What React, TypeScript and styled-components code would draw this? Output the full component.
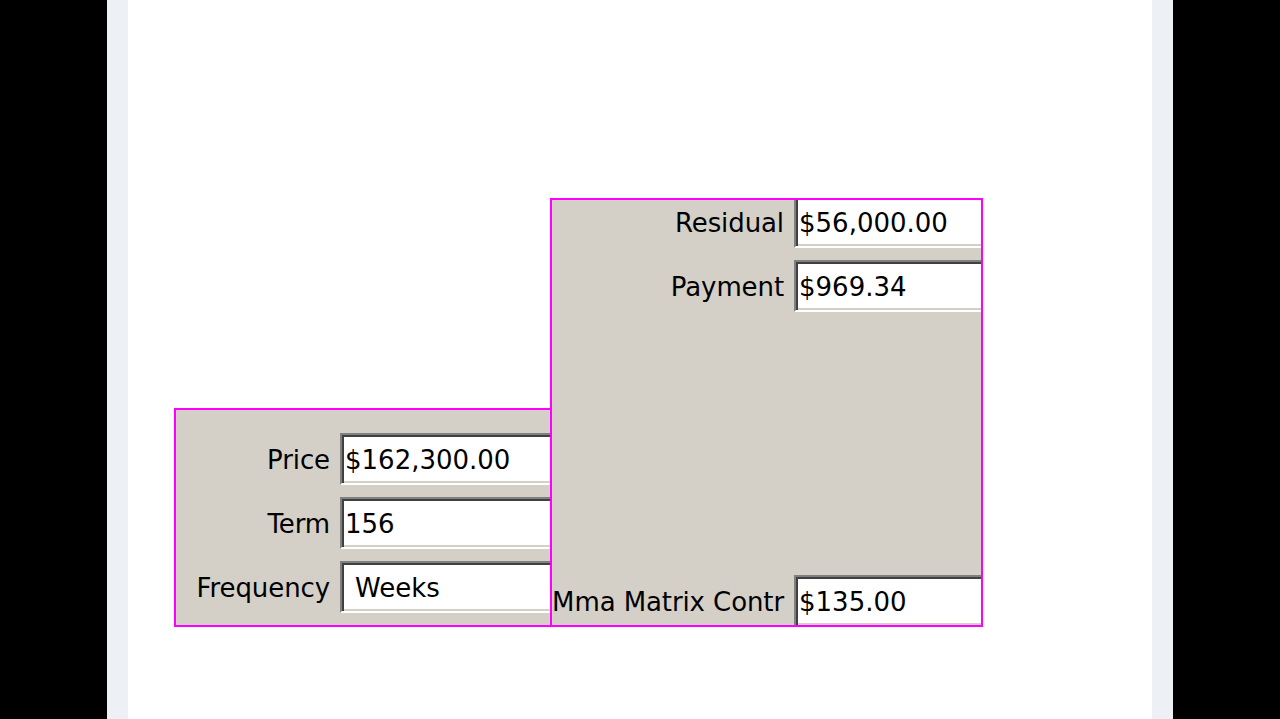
import styled, { createGlobalStyle } from "styled-components";

const GlobalStyle = createGlobalStyle`
  html, body {
    margin: 0;
    padding: 0;
    background: #000;
    height: 100%;
  }
  #root {
    min-height: 100%;
  }
`;

type Field = { label: string; value: string; select?: boolean };

const leftFields: Field[] = [
  { label: "Price", value: "$162,300.00" },
  { label: "Term", value: "156" },
  { label: "Frequency", value: "Weeks", select: true },
];

const topFields: Field[] = [
  { label: "Residual", value: "$56,000.00" },
  { label: "Payment", value: "$969.34" },
];

function FieldRow({ field, labelWidth }: { field: Field; labelWidth: number }) {
  return (
    <Row $labelWidth={labelWidth}>
      <Label>{field.label}</Label>
      <Input $select={field.select}>{field.value}</Input>
    </Row>
  );
}

export default function App() {
  return (
    <Page>
      <GlobalStyle />
      <Column>
        <Sheet>
          <Panels>
            <LeftPanel>
              {leftFields.map((f) => (
                <FieldRow key={f.label} field={f} labelWidth={154} />
              ))}
            </LeftPanel>
            <RightPanel>
              <TopGroup>
                {topFields.map((f) => (
                  <FieldRow key={f.label} field={f} labelWidth={232} />
                ))}
              </TopGroup>
              <BottomGroup>
                <FieldRow
                  field={{ label: "Mma Matrix Contr", value: "$135.00" }}
                  labelWidth={232}
                />
              </BottomGroup>
            </RightPanel>
          </Panels>
        </Sheet>
      </Column>
    </Page>
  );
}

const Page = styled.div`
  min-height: 100vh;
  background: #000;
  display: flex;
  justify-content: center;
`;

const Column = styled.div`
  width: 1066px;
  background: #edf1f5;
  padding: 0 21px;
  box-sizing: border-box;
  display: flex;
`;

const Sheet = styled.div`
  flex: 1;
  background: #fff;
  padding: 198px 0 0 46px;
`;

const Panels = styled.div`
  display: flex;
  align-items: flex-end;
`;

const Panel = styled.div`
  background: #d4d0c8;
  border: 2px solid #ff00ff;
  overflow: hidden;
  box-sizing: border-box;
  font-family: "DejaVu Sans", Verdana, sans-serif;
  font-size: 26px;
  color: #000;
`;

const LeftPanel = styled(Panel)`
  width: 378px;
  height: 219px;
  padding-top: 23px;
  display: flex;
  flex-direction: column;
  gap: 12px;
`;

const RightPanel = styled(Panel)`
  width: 433px;
  height: 429px;
  margin-left: -2px;
  display: flex;
  flex-direction: column;
  justify-content: space-between;
`;

const TopGroup = styled.div`
  margin-top: -4px;
  display: flex;
  flex-direction: column;
  gap: 12px;
`;

const BottomGroup = styled.div`
  margin-bottom: -2px;
`;

const Row = styled.div<{ $labelWidth: number }>`
  display: grid;
  grid-template-columns: ${({ $labelWidth }) => $labelWidth}px 220px;
  column-gap: 10px;
  align-items: center;
  height: 52px;
`;

const Label = styled.div`
  text-align: right;
  white-space: nowrap;
  letter-spacing: -0.1px;
  padding-top: 2px;
`;

const Input = styled.div<{ $select?: boolean }>`
  height: 52px;
  box-sizing: border-box;
  background: #fff;
  border-top: 2px solid #808080;
  border-left: 2px solid #808080;
  border-right: 2px solid #fff;
  border-bottom: 2px solid #fff;
  box-shadow: inset 2px 2px 0 #404040, inset -2px -2px 0 #d4d0c8;
  padding: 2px 0 0 ${({ $select }) => ($select ? 13 : 3)}px;
  display: flex;
  align-items: center;
  white-space: nowrap;
  color: #000;
`;
